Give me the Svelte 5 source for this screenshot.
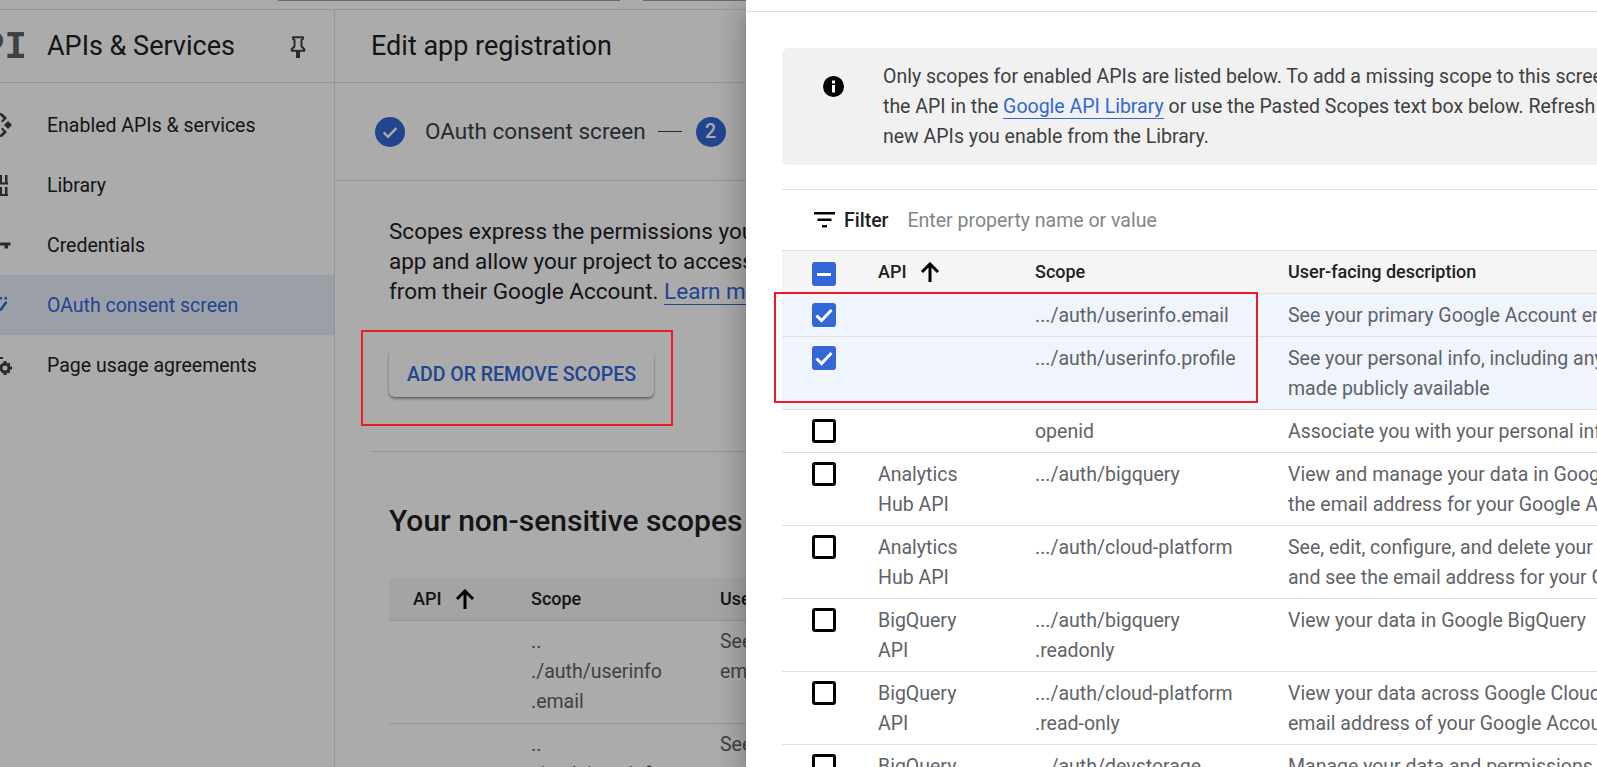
<script lang="ts">
	const navItems = [
		{ label: 'Enabled APIs & services', icon: 'api' },
		{ label: 'Library', icon: 'library' },
		{ label: 'Credentials', icon: 'key' },
		{ label: 'OAuth consent screen', icon: 'oauth', active: true },
		{ label: 'Page usage agreements', icon: 'gear' },
	];

	const scopeRows = [
		{ api: [''], scope: ['.../auth/userinfo.email'], desc: ['See your primary Google Account email address'], checked: true },
		{ api: [''], scope: ['.../auth/userinfo.profile'], desc: ["See your personal info, including any personal info you've", 'made publicly available'], checked: true },
		{ api: [''], scope: ['openid'], desc: ['Associate you with your personal info on Google'] },
		{ api: ['Analytics', 'Hub API'], scope: ['.../auth/bigquery'], desc: ['View and manage your data in Google BigQuery and see', 'the email address for your Google Account'] },
		{ api: ['Analytics', 'Hub API'], scope: ['.../auth/cloud-platform'], desc: ['See, edit, configure, and delete your Google Cloud data', 'and see the email address for your Google Account'] },
		{ api: ['BigQuery', 'API'], scope: ['.../auth/bigquery', '.readonly'], desc: ['View your data in Google BigQuery'] },
		{ api: ['BigQuery', 'API'], scope: ['.../auth/cloud-platform', '.read-only'], desc: ['View your data across Google Cloud services and see the', 'email address of your Google Account'] },
		{ api: ['BigQuery', 'API'], scope: ['.../auth/devstorage', '.full_control'], desc: ['Manage your data and permissions in Cloud Storage', 'and see the email address for your Google Account'] },
	];

	const addedRows = [
		{ scope: ['..', './auth/userinfo', '.email'], desc: ['See your primary Google Account', 'email address'] },
		{ scope: ['..', './auth/userinfo', '.profile'], desc: ['See your personal info'] },
	];
</script>

<div class="app">
	<div class="topbar"><span class="tab-a"></span><span class="tab-b"></span></div>

	<div class="page">
		<nav class="nav">
			<header class="nav-head">
				<span class="logo"><span>API</span></span>
				<span class="nav-title">APIs &amp; Services</span>
				<svg class="pin" viewBox="0 0 18 22" width="18" height="22">
					<path d="M4 1.200h10v1.600l-1.500 1.200v6.200l2.800 3v1.600H10v6.800H8v-6.800H2.700v-1.600l2.800-3V4L4 2.800z" fill="none" stroke="#3c4043" stroke-width="2" stroke-linejoin="round"/>
				</svg>
			</header>
			<ul class="nav-list">
				{#each navItems as item}
					<li class="nav-item" class:active={item.active}>
						<span class="nav-icon">
							{#if item.icon === 'api'}
								<svg viewBox="0 0 24 24" width="24" height="24" fill="#3c4043">
									<path d="M0 2l3.500 3.500L1 8l1.500 1.500L7 5 2.500 .5 0 0zM0 22l3.500-3.500L1 16l1.500-1.500L7 19l-4.500 4.500L0 24z"/>
									<path d="M8 8l4 4-4 4-4-4z"/>
								</svg>
							{:else if item.icon === 'library'}
								<svg viewBox="0 0 24 24" width="24" height="24" fill="#3c4043">
									<path d="M0 2h2v8H0zM5 2h2.500v8H5zM0 14h2v8H0zM5 14h2.500v8H5zM0 9.500h8V11.500H0zM0 21h8v2H0z"/>
								</svg>
							{:else if item.icon === 'key'}
								<svg viewBox="0 0 24 24" width="24" height="24" fill="#3c4043">
									<path d="M0 9.500h10.500v3H8v3H4.500v-3H0z"/>
								</svg>
							{:else if item.icon === 'oauth'}
								<svg viewBox="0 0 24 24" width="24" height="24" fill="#3367d6">
									<path d="M0 4h2v2.500H0zM4.500 4H7v2.500H4.500zM5.500 8L7.500 9.500 1.500 18 0 17.500V15.500z"/>
								</svg>
							{:else}
								<svg viewBox="0 0 24 24" width="24" height="24">
									<circle cx="5" cy="15" r="4" fill="none" stroke="#3c4043" stroke-width="3"/>
									<path d="M3.500 8h3v3h-3zM3.500 19h3v3h-3zM9 13.500h3v3H9zM0 4h3v2H0zM8 9.500l2.500 1-1.500 2.500zM8 20.500l2.500-1-1.500-2.500z" fill="#3c4043"/>
								</svg>
							{/if}
						</span>
						<span>{item.label}</span>
					</li>
				{/each}
			</ul>
		</nav>

		<main class="main">
			<header class="main-head">Edit app registration</header>
			<div class="stepper">
				<span class="step-dot">
					<svg viewBox="0 0 24 24" width="22" height="22"><path d="M5 12.500l4.700 4.700L19 7.800" fill="none" stroke="#fff" stroke-width="2.600"/></svg>
				</span>
				<span class="step-label">OAuth consent screen</span>
				<span class="step-rule"></span>
				<span class="step-dot">2</span>
			</div>
			<section class="content">
				<p class="lead">
					Scopes express the permissions you request users to authorize for your<br />
					app and allow your project to access specific types of private user data<br />
					from their Google Account. <a href="#learn">Learn more</a>
				</p>
				<button class="scopes-btn">ADD OR REMOVE SCOPES</button>
				<hr class="rule" />
				<h2>Your non-sensitive scopes</h2>
				<table class="added">
					<thead>
						<tr>
							<th class="added-api"><span class="sort">API
								<svg viewBox="0 0 20 20" width="20" height="20"><path d="M10 20V2.500M2 10l8-8 8 8" fill="none" stroke="#000" stroke-width="3"/></svg>
							</span></th>
							<th class="added-scope">Scope</th>
							<th>User-facing description</th>
						</tr>
					</thead>
					<tbody>
						{#each addedRows as row}
							<tr>
								<td></td>
								<td>{#each row.scope as line}<div>{line}</div>{/each}</td>
								<td>{#each row.desc as line}<div>{line}</div>{/each}</td>
							</tr>
						{/each}
					</tbody>
				</table>
			</section>
		</main>
	</div>

	<div class="scrim"></div>
	<div class="callout callout-left"></div>

	<aside class="drawer">
		<div class="drawer-top"></div>
		<div class="notice">
			<svg class="notice-icon" viewBox="0 0 21 21" width="21" height="21">
				<circle cx="10.500" cy="10.500" r="10.500" fill="#000"/>
				<path d="M9 9h3v7.500H9zM9 4.500h3v3H9z" fill="#fff"/>
			</svg>
			<p>
				Only scopes for enabled APIs are listed below. To add a missing scope to this screen, find and enable<br />
				the API in the <a href="#library">Google API Library</a> or use the Pasted Scopes text box below. Refresh the scope table to see<br />
				new APIs you enable from the Library.
			</p>
		</div>
		<div class="filter">
			<svg viewBox="0 0 21 16" width="21" height="16"><path d="M0 0h21v2.500H0zM3.500 6.500h14V9h-14zM8 13h5v2.500H8z" fill="#000"/></svg>
			<span class="filter-label">Filter</span>
			<span class="filter-hint">Enter property name or value</span>
		</div>
		<table class="scopes">
			<thead>
				<tr>
					<th class="col-check">
						<span class="check on">
							<svg viewBox="0 0 24 24" width="24" height="24"><path d="M5 11h14v3H5z" fill="#fff"/></svg>
						</span>
					</th>
					<th class="col-api"><span class="sort">API
						<svg viewBox="0 0 20 20" width="20" height="20"><path d="M10 20V2.500M2 10l8-8 8 8" fill="none" stroke="#000" stroke-width="3"/></svg>
					</span></th>
					<th class="col-scope">Scope</th>
					<th>User-facing description</th>
				</tr>
			</thead>
			<tbody>
				{#each scopeRows as row}
					<tr class:selected={row.checked}>
						<td>
							{#if row.checked}
								<span class="check on">
									<svg viewBox="0 0 24 24" width="24" height="24"><path d="M4.500 12.500l5 5L19.500 7" fill="none" stroke="#fff" stroke-width="3"/></svg>
								</span>
							{:else}
								<span class="check"></span>
							{/if}
						</td>
						<td>{#each row.api as line}<div>{line}</div>{/each}</td>
						<td>{#each row.scope as line}<div>{line}</div>{/each}</td>
						<td>{#each row.desc as line}<div>{line}</div>{/each}</td>
					</tr>
				{/each}
			</tbody>
		</table>
	</aside>

	<div class="callout callout-right"></div>
</div>

<style>
:global(body) { margin: 0; background: #fff; }

.app {
	position: relative;
	width: 1597px; height: 767px;
	overflow: hidden;
	font-family: Roboto, "Liberation Sans", sans-serif;
	color: #202124;
}

.topbar { display: flex; height: 9px; border-bottom: 1px solid #e0e0e0; box-sizing: content-box; }
.tab-a, .tab-b { height: 1px; background: #9aa0a6; }
.tab-a { margin-left: 278px; width: 342px; }
.tab-b { margin-left: 23px; width: 300px; }

.page { display: flex; height: 757px; }

.nav { width: 334px; flex-shrink: 0; border-right: 1px solid #e0e0e0; overflow: hidden; }
.nav-head {
	display: flex; align-items: center;
	height: 72px; border-bottom: 1px solid #e0e0e0;
}
.logo {
	width: 24px; flex-shrink: 0; overflow: hidden;
	font: 700 38px "Liberation Mono", monospace;
	color: #5f6368;
	white-space: nowrap;
	margin-top: 2px;
}
.logo span { display: block; margin-left: -41px; }
.nav-title { font-size: 27px; margin-left: 23px; flex: 1; }
.pin { margin-right: 27px; margin-top: 2px; }

.nav-list { list-style: none; margin: 0; padding: 12px 0 0; }
.nav-item {
	display: flex; align-items: center;
	height: 60px;
	font-size: 19.5px;
}
.nav-item.active { background: #e8eefb; color: #3367d6; }
.nav-icon { width: 47px; height: 24px; flex-shrink: 0; overflow: hidden; }
.nav-icon svg { display: block; }

.main { flex: 1; min-width: 0; overflow: hidden; }
.main-head {
	height: 73px; box-sizing: border-box;
	padding: 0 36px; line-height: 72px;
	font-size: 27px;
	border-bottom: 1px solid #e0e0e0;
}
.stepper {
	display: flex; align-items: center;
	height: 98px; box-sizing: border-box;
	padding-left: 40px;
	border-bottom: 1px solid #e0e0e0;
}
.step-dot {
	display: flex; align-items: center; justify-content: center;
	width: 30px; height: 30px; border-radius: 50%;
	background: #3367d6; color: #fff;
	font-size: 19.5px; font-weight: 500;
	flex-shrink: 0;
}
.step-label { margin: 0 0 2px 20px; font-size: 22.5px; color: #3c4043; white-space: nowrap; }
.step-rule { width: 24px; height: 1px; background: #3c4043; margin: 0 14px 0 12px; flex-shrink: 0; }

.content { padding: 35px 0 0 36px; width: 700px; }
.lead { margin: 0 0 43px 18px; font-size: 22.5px; line-height: 30px; white-space: nowrap; }
.lead a, .notice a { color: #3367d6; text-decoration: none; border-bottom: 1px solid #3367d6; }
.scopes-btn {
	display: block;
	margin-left: 18px;
	width: 265px; height: 48px; padding: 2px 0 0;
	background: #fff; border: none; border-radius: 6px;
	box-shadow: 0 2px 3px rgba(0,0,0,.35), 0 1px 1px rgba(0,0,0,.1);
	color: #3367d6;
	font: 500 19.5px Roboto, sans-serif;
}
.rule { margin: 54px 0 0; border: none; border-top: 1px solid #e0e0e0; }
h2 { margin: 51px 0 39px 18px; font-size: 30px; line-height: 36px; font-weight: 500; white-space: nowrap; }

table { border-collapse: separate; border-spacing: 0; table-layout: fixed; font-size: 19.5px; line-height: 30px; }
th {
	text-align: left; font-weight: 500; font-size: 18px;
	padding: 6px 0; height: 30px;
	background: #f5f5f5;
	border-bottom: 1px solid #e0e0e0;
	white-space: nowrap;
}
td {
	vertical-align: top;
	padding: 7px 0 5px;
	color: #5f6368;
	border-bottom: 1px solid #e0e0e0;
	white-space: nowrap;
}
.sort { display: inline-flex; align-items: center; gap: 13px; }

.added { margin-left: 18px; width: 700px; }
.added td { padding: 6px 0; }
.added-api { width: 142px; padding-left: 24px; box-sizing: border-box; }
.added-scope { width: 189px; }

.scrim { position: absolute; inset: 0; background: rgba(0,0,0,.33); }

.callout { position: absolute; border: 2px solid #ed1c24; box-sizing: border-box; }
.callout-left { left: 361px; top: 330px; width: 312px; height: 96px; }
.callout-right { left: 774px; top: 292px; width: 484px; height: 111px; }

.drawer {
	position: absolute; top: 0; left: 746px; bottom: 0; width: 1100px;
	background: #fff;
	box-shadow: 0 8px 10px -5px rgba(0,0,0,.2), 0 16px 24px 2px rgba(0,0,0,.14), 0 6px 30px 5px rgba(0,0,0,.12);
}
.drawer-top { height: 11px; border-bottom: 1px solid #e0e0e0; }
.notice {
	display: flex;
	margin: 36px 0 0 36px; height: 117px; box-sizing: border-box;
	padding-top: 14px;
	background: #f1f1f1; border-radius: 6px;
	font-size: 19.5px; line-height: 30px; color: #3c4043;
}
.notice-icon { margin: 14px 39px 0 41px; flex-shrink: 0; }
.notice p { margin: 0; white-space: nowrap; }

.filter {
	display: flex; align-items: center;
	margin: 24px 0 0 36px; height: 60px;
	border-top: 1px solid #e0e0e0;
	padding-left: 32px;
	font-size: 19.5px;
}
.filter-label { font-weight: 500; margin-left: 9px; }
.filter-hint { margin-left: 19px; color: #80868b; }

.scopes { margin-left: 36px; width: 1064px; }
.scopes th { border-top: 1px solid #e0e0e0; }
.col-check { width: 96px; padding-left: 30px; box-sizing: border-box; }
.col-api { width: 157px; }
.col-scope { width: 253px; }
.scopes td:first-child { padding-left: 30px; }
.selected td { background: #f0f4fc; }

.check {
	display: block; box-sizing: border-box;
	width: 24px; height: 24px; margin-top: 2px;
	border: 3px solid #000; border-radius: 3px;
	background: #fff;
}
.check.on { border: none; background: #3367d6; }
.check svg { display: block; }
.scopes th .check { margin-top: 4px; }
</style>
